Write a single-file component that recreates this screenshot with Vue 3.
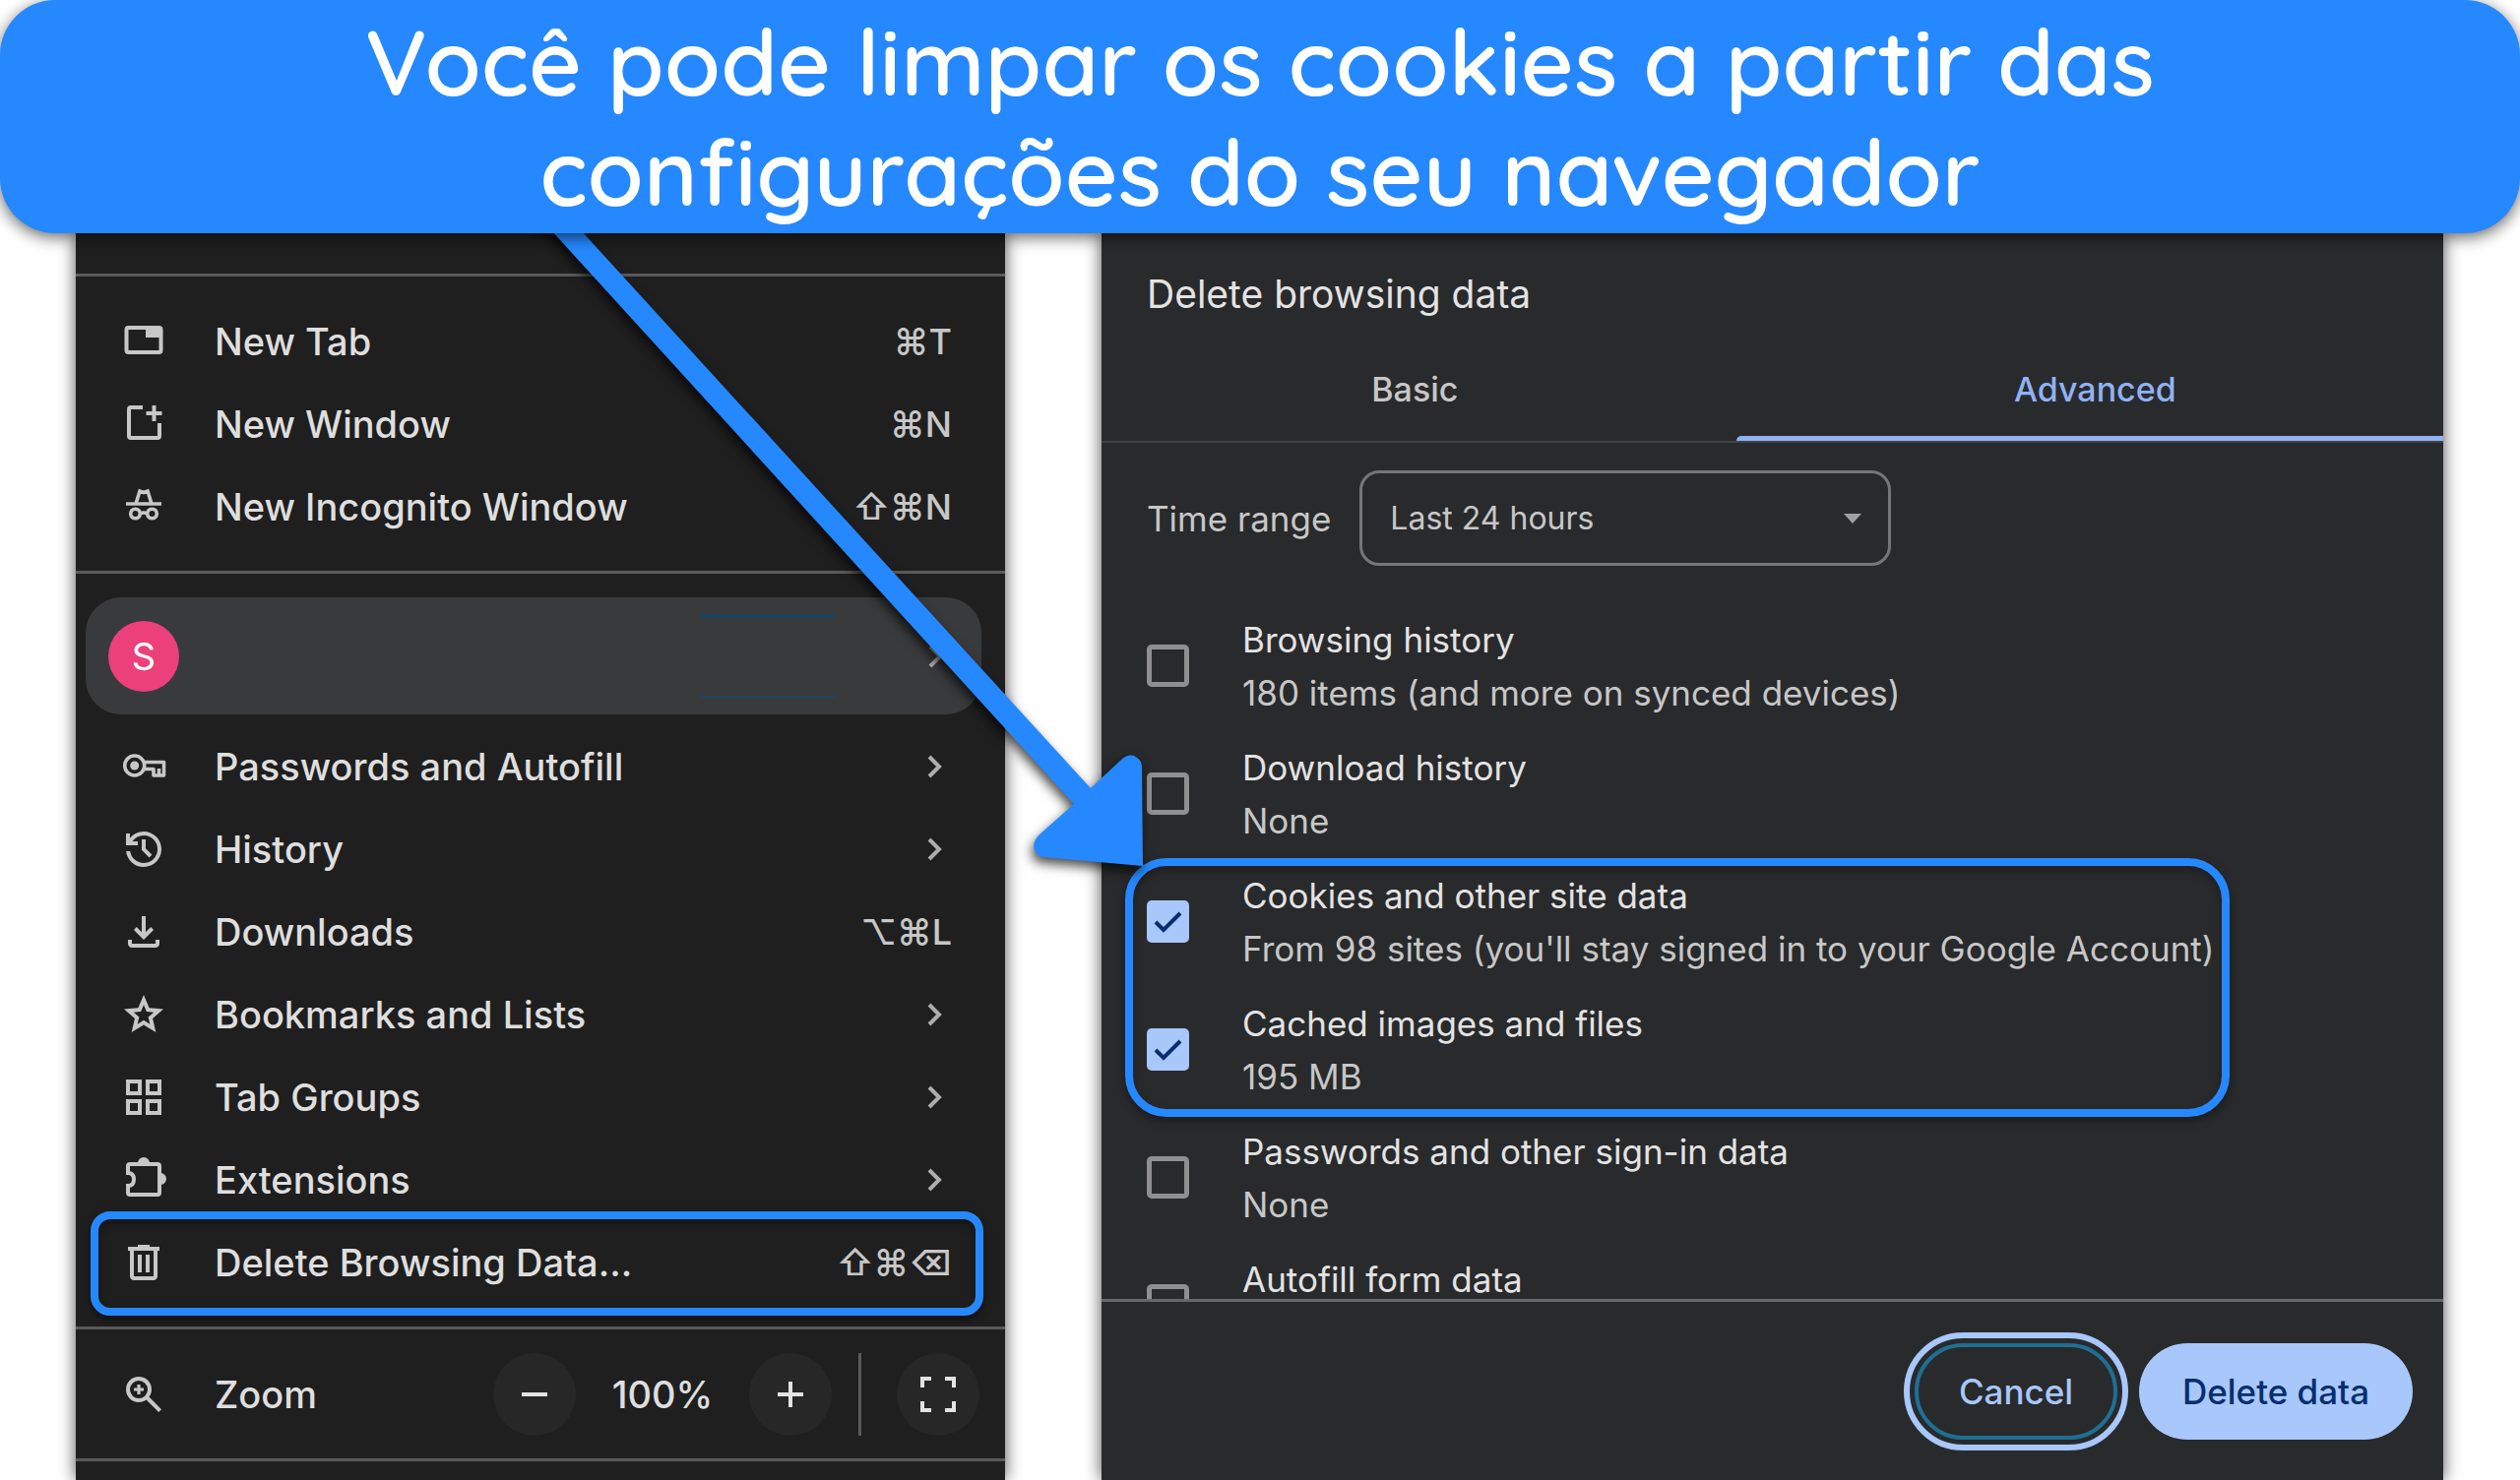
<template>
    <div class="page">
        <h1 class="banner">Você pode limpar os cookies a partir das<br />configurações do seu navegador</h1>

        <main class="panels">
            <nav class="menu" aria-label="Menu">
                <div class="menu-group">
                    <button v-for="item in windowItems" :key="item.label" type="button" class="menu-row">
                        <svg class="icon" :viewBox="item.viewBox || '0 0 48 48'" v-html="icons[item.icon]"></svg>
                        <span class="menu-label">{{ item.label }}</span>
                        <kbd class="shortcut">{{ item.shortcut }}</kbd>
                    </button>
                </div>

                <div class="menu-group">
                    <button type="button" class="profile" aria-label="S">
                        <span class="avatar">S</span>
                        <span class="redacted"></span>
                        <svg class="chevron" viewBox="0 0 16 24"><path d="M2 2l10 10L2 22" /></svg>
                    </button>
                    <button
                        v-for="item in toolItems"
                        :key="item.label"
                        type="button"
                        class="menu-row"
                        :class="{ marked: item.marked }"
                    >
                        <svg class="icon" :viewBox="item.viewBox || '0 0 48 48'" v-html="icons[item.icon]"></svg>
                        <span class="menu-label">{{ item.label }}</span>
                        <kbd v-if="item.shortcut" class="shortcut">{{ item.shortcut }}</kbd>
                        <svg v-else class="chevron" viewBox="0 0 16 24"><path d="M2 2l10 10L2 22" /></svg>
                    </button>
                </div>

                <div class="menu-group zoom-group">
                    <svg class="icon" viewBox="0 -960 960 960" v-html="icons.zoom"></svg>
                    <span class="menu-label">Zoom</span>
                    <button type="button" class="round" aria-label="Zoom out" @click="zoom -= 10">
                        <svg viewBox="0 0 36 36"><path d="M5 18h26" /></svg>
                    </button>
                    <output class="zoom-value">{{ zoom }}%</output>
                    <button type="button" class="round" aria-label="Zoom in" @click="zoom += 10">
                        <svg viewBox="0 0 36 36"><path d="M5 18h26M18 5v26" /></svg>
                    </button>
                    <span class="zoom-divider"></span>
                    <button type="button" class="round" aria-label="Full screen">
                        <svg viewBox="0 0 36 36">
                            <path d="M2 11V2h9M25 2h9v9M34 25v9h-9M11 34H2v-9" />
                        </svg>
                    </button>
                </div>
                <div class="menu-group"></div>
            </nav>

            <section class="dialog">
                <h2 class="dialog-title">Delete browsing data</h2>
                <div class="tabs-clip">
                    <div class="tabs" role="tablist">
                        <button
                            v-for="tab in tabs"
                            :key="tab"
                            type="button"
                            role="tab"
                            class="tab"
                            :class="{ active: tab === activeTab }"
                            :aria-selected="tab === activeTab"
                            @click="activeTab = tab"
                        >
                            {{ tab }}
                        </button>
                    </div>
                </div>

                <div class="dialog-body">
                    <div class="range">
                        <label for="time-range">Time range</label>
                        <div class="select-wrap">
                            <select id="time-range">
                                <option>Last 24 hours</option>
                            </select>
                            <svg class="select-arrow" viewBox="0 0 18 10"><path d="M0 0h18L9 10z" /></svg>
                        </div>
                    </div>

                    <div v-for="(group, g) in dataGroups" :key="g" class="options" :class="{ circled: group.circled }">
                        <label v-for="option in group.options" :key="option.title" class="option">
                            <input v-model="option.checked" type="checkbox" />
                            <span class="option-text">
                                <span class="option-title">{{ option.title }}</span>
                                <span v-if="option.detail" class="option-detail">{{ option.detail }}</span>
                            </span>
                        </label>
                    </div>
                </div>

                <footer class="dialog-footer">
                    <button type="button" class="pill cancel">Cancel</button>
                    <button type="button" class="pill confirm">Delete data</button>
                </footer>
            </section>
        </main>

        <svg class="arrow" viewBox="540 200 640 700" aria-hidden="true">
            <path
                d="M529 200H559L1108 801L1138 773Q1148 764 1155 770Q1160 773 1160 780L1161 880L1060 871Q1051 870 1050 860Q1050 854 1056 848L1091 817Z"
            />
        </svg>
    </div>
</template>

<script setup>
import { ref } from 'vue';

const symbol = '0 -960 960 960';

// Line icons are drawn on a 48 grid, filled ones on the 960 symbol grid
const icons = {
    tab: '<rect x="6.5" y="10" width="35" height="25" rx="2" fill="none" stroke="currentColor" stroke-width="4"/><path d="M26 9h16v11H26z"/>',
    window: '<path d="M23 7H11a2 2 0 0 0-2 2v27a2 2 0 0 0 2 2h27a2 2 0 0 0 2-2V23M34.5 5v16M26.500 13h16" fill="none" stroke="currentColor" stroke-width="4"/>',
    incognito: '<g fill="none" stroke="currentColor" stroke-width="4"><path d="M6 21h36M16 21l4-13 4 1.500 4-1.500 4 13M20 31q4-2 8 0" stroke-width="3.600"/><circle cx="15.500" cy="31" r="4.800" stroke-width="3.600"/><circle cx="32.500" cy="31" r="4.800" stroke-width="3.600"/></g>',
    key: '<g fill="none" stroke="currentColor" stroke-width="3.600" stroke-linejoin="round"><circle cx="14.700" cy="23" r="10"/><path d="M24 19.500h20.500V33H34v-6.500H24M39.500 26v7"/></g><circle cx="14.700" cy="23" r="4.500"/>',
    history: '<path d="M480-120q-138 0-240.500-91.500T122-440h82q14 104 92.500 172T480-200q117 0 198.500-81.500T760-480q0-117-81.500-198.500T480-760q-69 0-129 32t-101 88h110v80H120v-240h80v94q51-64 124.500-99T480-840q75 0 140.500 28.500t114 77q48.500 48.500 77 114T840-480q0 75-28.500 140.500t-77 114q-48.500 48.500-114 77T480-120Zm112-192L440-464v-216h80v184l128 128-56 56Z"/>',
    download: '<path d="M480-320 280-520l56-58 104 104v-326h80v326l104-104 56 58-200 200ZM240-160q-33 0-56.500-23.500T160-240v-80h80v80h480v-80h80v80q0 33-23.500 56.500T720-160H240Z"/>',
    star: '<path d="m354-287 126-76 126 77-33-144 111-96-146-13-58-136-58 135-146 13 111 97-33 143ZM233-120l65-281L80-590l288-25 112-265 112 265 288 25-218 189 65 281-247-149-247 149Z"/>',
    grid: '<path d="M120-520v-320h320v320H120Zm0 400v-320h320v320H120Zm400-400v-320h320v320H520Zm0 400v-320h320v320H520ZM200-600h160v-160H200v160Zm400 0h160v-160H600v160Zm0 400h160v-160H600v160Zm-400 0h160v-160H200v160Z"/>',
    puzzle: '<path d="M10 8h28a2 2 0 0 1 2 2v27a2 2 0 0 1-2 2H10a2 2 0 0 1-2-2v-7c4 0 6-2.500 6-6.500s-2-6.500-6-6.500v-7a2 2 0 0 1 2-2Z" fill="none" stroke="currentColor" stroke-width="4"/><path d="M18 7a6 6 0 0 1 12 0zM41 17a6 6 0 0 1 0 12z"/>',
    trash: '<path d="M280-120q-33 0-56.500-23.500T200-200v-520h-40v-80h200v-40h240v40h200v80h-40v520q0 33-23.500 56.500T680-120H280Zm400-600H280v520h400v-520ZM360-280h80v-360h-80v360Zm160 0h80v-360h-80v360Z"/>',
    zoom: '<path d="M784-120 532-372q-30 24-69 38t-83 14q-109 0-184.500-75.500T120-580q0-109 75.500-184.500T380-840q109 0 184.500 75.500T640-580q0 44-14 83t-38 69l252 252-56 56ZM380-400q75 0 127.500-52.500T560-580q0-75-52.500-127.500T380-760q-75 0-127.500 52.500T200-580q0 75 52.500 127.500T380-400Zm-32-80v-68h-68v-64h68v-68h64v68h68v64h-68v68Z"/>',
};

const windowItems = [
    { label: 'New Tab', icon: 'tab', shortcut: '⌘T' },
    { label: 'New Window', icon: 'window', shortcut: '⌘N' },
    { label: 'New Incognito Window', icon: 'incognito', shortcut: '⇧⌘N' },
];

const toolItems = [
    { label: 'Passwords and Autofill', icon: 'key' },
    { label: 'History', icon: 'history', viewBox: symbol },
    { label: 'Downloads', icon: 'download', viewBox: symbol, shortcut: '⌥⌘L' },
    { label: 'Bookmarks and Lists', icon: 'star', viewBox: symbol },
    { label: 'Tab Groups', icon: 'grid', viewBox: symbol },
    { label: 'Extensions', icon: 'puzzle' },
    { label: 'Delete Browsing Data...', icon: 'trash', viewBox: symbol, shortcut: '⇧⌘⌫', marked: true },
];

const zoom = ref(100);

const tabs = ['Basic', 'Advanced'];
const activeTab = ref('Advanced');

const dataGroups = ref([
    {
        options: [
            { title: 'Browsing history', detail: '180 items (and more on synced devices)', checked: false },
            { title: 'Download history', detail: 'None', checked: false },
        ],
    },
    {
        circled: true,
        options: [
            {
                title: 'Cookies and other site data',
                detail: "From 98 sites (you'll stay signed in to your Google Account)",
                checked: true,
            },
            { title: 'Cached images and files', detail: '195 MB', checked: true },
        ],
    },
    {
        options: [
            { title: 'Passwords and other sign-in data', detail: 'None', checked: false },
            { title: 'Autofill form data', detail: '', checked: false },
        ],
    },
]);
</script>

<style>
body {
    background: #fff;
}
</style>

<style scoped>
.page {
    position: relative;
    display: flex;
    flex-direction: column;
    height: 100vh;
    overflow: hidden;
    font-family: Inter, 'Liberation Sans', sans-serif;
}

.page *,
.page *::before,
.page *::after {
    box-sizing: border-box;
}

button {
    border: 0;
    background: none;
    color: inherit;
    font: inherit;
    padding: 0;
}

.banner {
    position: relative;
    z-index: 3;
    margin: 0;
    padding: 6px 0 7px;
    border-radius: 56px;
    background: #2688ff;
    box-shadow: 0 4px 16px rgba(0, 0, 0, 0.6);
    color: #fff;
    font-family: Quicksand, Inter, sans-serif;
    font-size: 93px;
    font-weight: 600;
    line-height: 112px;
    text-align: center;
}

.panels {
    display: flex;
    flex: 1;
    gap: 98px;
    min-height: 0;
    padding: 0 78px 0 77px;
}

.menu,
.dialog {
    display: flex;
    flex-direction: column;
    min-width: 0;
    box-shadow: 0 0 16px rgba(0, 0, 0, 0.7);
}

/* Browser menu */
.menu {
    flex: 944;
    padding-top: 41px;
    background: #1f1f1f;
    color: #dedede;
    font-size: 38px;
    font-weight: 500;
}

.menu-group {
    padding: 24px 0 23px;
    border-top: 3px solid #5a5a5a;
}

.menu-row {
    position: relative;
    display: flex;
    align-items: center;
    width: 100%;
    height: 84px;
    padding: 0 54px 0 45px;
    text-align: left;
}

.icon {
    width: 48px;
    height: 48px;
    flex: none;
    color: #c7c7c7;
    fill: currentColor;
}

.menu-label {
    flex: 1;
    margin-left: 48px;
}

.shortcut {
    color: #c7c7c7;
    font: inherit;
    font-size: 36px;
}

.chevron {
    width: 16px;
    height: 24px;
    margin-right: 9px;
    fill: none;
    stroke: #adadad;
    stroke-width: 4px;
}

.marked::after {
    content: '';
    position: absolute;
    inset: -10px 22px -12px 15px;
    border: 8px solid #2688ff;
    border-radius: 20px;
    box-shadow: 0 4px 10px rgba(0, 0, 0, 0.5), inset 0 4px 10px rgba(0, 0, 0, 0.4);
}

.profile {
    display: flex;
    align-items: center;
    justify-content: space-between;
    width: calc(100% - 34px);
    height: 119px;
    margin: 0 24px 11px 10px;
    padding: 0 30px 0 23px;
    border-radius: 36px;
    background: #393a3c;
}

.profile .chevron {
    margin-right: 8px;
}

.avatar {
    width: 72px;
    height: 72px;
    border-radius: 50%;
    background: #ec407a;
    color: #fff;
    font-size: 38px;
    font-weight: 400;
    line-height: 72px;
    text-align: center;
}

.redacted {
    width: 136px;
    height: 86px;
    margin: 0 95px 0 auto;
    border-top: 4px solid #1c4259;
    border-bottom: 3px solid #26425a;
}

.zoom-group {
    display: flex;
    align-items: center;
    padding: 24px 26px 23px 45px;
}

.round {
    display: flex;
    align-items: center;
    justify-content: center;
    width: 84px;
    height: 84px;
    border-radius: 50%;
    background: #272727;
}

.round svg {
    width: 36px;
    height: 36px;
    fill: none;
    stroke: #e3e3e3;
    stroke-width: 4px;
}

.zoom-value {
    width: 176px;
    text-align: center;
}

.zoom-divider {
    width: 3px;
    height: 84px;
    margin: 0 36px 0 27px;
    background: #5a5a5a;
}

/* Dialog */
.dialog {
    flex: 1363;
    background: #292a2c;
    color: #c7c7c7;
    font-size: 35px;
}

.dialog-title {
    margin: 0;
    padding: 38px 46px 0;
    color: #e3e3e3;
    font-size: 39px;
    font-weight: 400;
    line-height: 48px;
}

.tabs-clip {
    overflow: hidden;
    border-bottom: 2px solid #404143;
}

.tabs {
    display: flex;
    margin: 0 -11px 0 -8px;
}

.tab {
    position: relative;
    flex: 1 1 auto;
    height: 125px;
    padding-top: 19px;
    font-size: 34px;
    font-weight: 500;
}

.tab.active {
    color: #8fb2f4;
}

.tab.active::after {
    content: '';
    position: absolute;
    inset: auto 0 0;
    height: 5px;
    border-radius: 5px 5px 0 0;
    background: #8fb2f4;
}

.dialog-body {
    flex: 1;
    min-height: 0;
    overflow: hidden;
    padding: 28px 46px 0;
}

.range {
    display: flex;
    align-items: center;
    gap: 29px;
    margin-bottom: 37px;
}

.select-wrap {
    position: relative;
    width: 540px;
}

.select-wrap select {
    display: block;
    width: 100%;
    height: 97px;
    padding: 0 28px;
    border: 3px solid #757678;
    border-radius: 20px;
    background: none;
    color: inherit;
    font: inherit;
    font-size: 32px;
    appearance: none;
}

.select-arrow {
    position: absolute;
    top: 44px;
    right: 30px;
    width: 18px;
    height: 10px;
    fill: #a0a1a2;
    pointer-events: none;
}

.options {
    position: relative;
}

.circled::after {
    content: '';
    position: absolute;
    inset: 0 171px -3px -22px;
    border: 8px solid #2688ff;
    border-radius: 42px;
    box-shadow: 0 4px 10px rgba(0, 0, 0, 0.4), inset 0 4px 10px rgba(0, 0, 0, 0.3);
    pointer-events: none;
}

.option {
    display: flex;
    gap: 54px;
    height: 130px;
    padding-top: 18px;
}

.option input {
    flex: none;
    width: 43px;
    height: 43px;
    margin: 25px 0 0;
    border: 5px solid #8f8f8f;
    border-radius: 5px;
    appearance: none;
}

.option input:checked {
    border: 0;
    background: #a8c7fa url("data:image/svg+xml,%3Csvg xmlns='http://www.w3.org/2000/svg' viewBox='0 0 43 43'%3E%3Cpath d='M9 22l8 8 17-17' fill='none' stroke='%23062e6f' stroke-width='4'/%3E%3C/svg%3E");
}

.option-text {
    display: flex;
    flex-direction: column;
    gap: 14px;
    line-height: 40px;
    white-space: nowrap;
}

.option-title {
    color: #e3e3e3;
}

.dialog-footer {
    display: flex;
    justify-content: flex-end;
    gap: 22px;
    height: 184px;
    padding: 42px 31px;
    border-top: 3px solid #666769;
}

.pill {
    height: 98px;
    border-radius: 49px;
    font-weight: 500;
}

.cancel {
    width: 206px;
    border: 4px solid #1f6f93;
    outline: 6px solid #a8c7fa;
    outline-offset: 5px;
    color: #a8c7fa;
}

.confirm {
    width: 278px;
    background: #a8c7fa;
    color: #062e6f;
}

/* Pointer from the banner to the circled options */
.arrow {
    position: absolute;
    z-index: 2;
    top: 200px;
    left: 540px;
    width: 640px;
    height: 700px;
    fill: #2688ff;
    filter: drop-shadow(-2px 6px 6px rgba(0, 0, 0, 0.7));
    pointer-events: none;
}
</style>
